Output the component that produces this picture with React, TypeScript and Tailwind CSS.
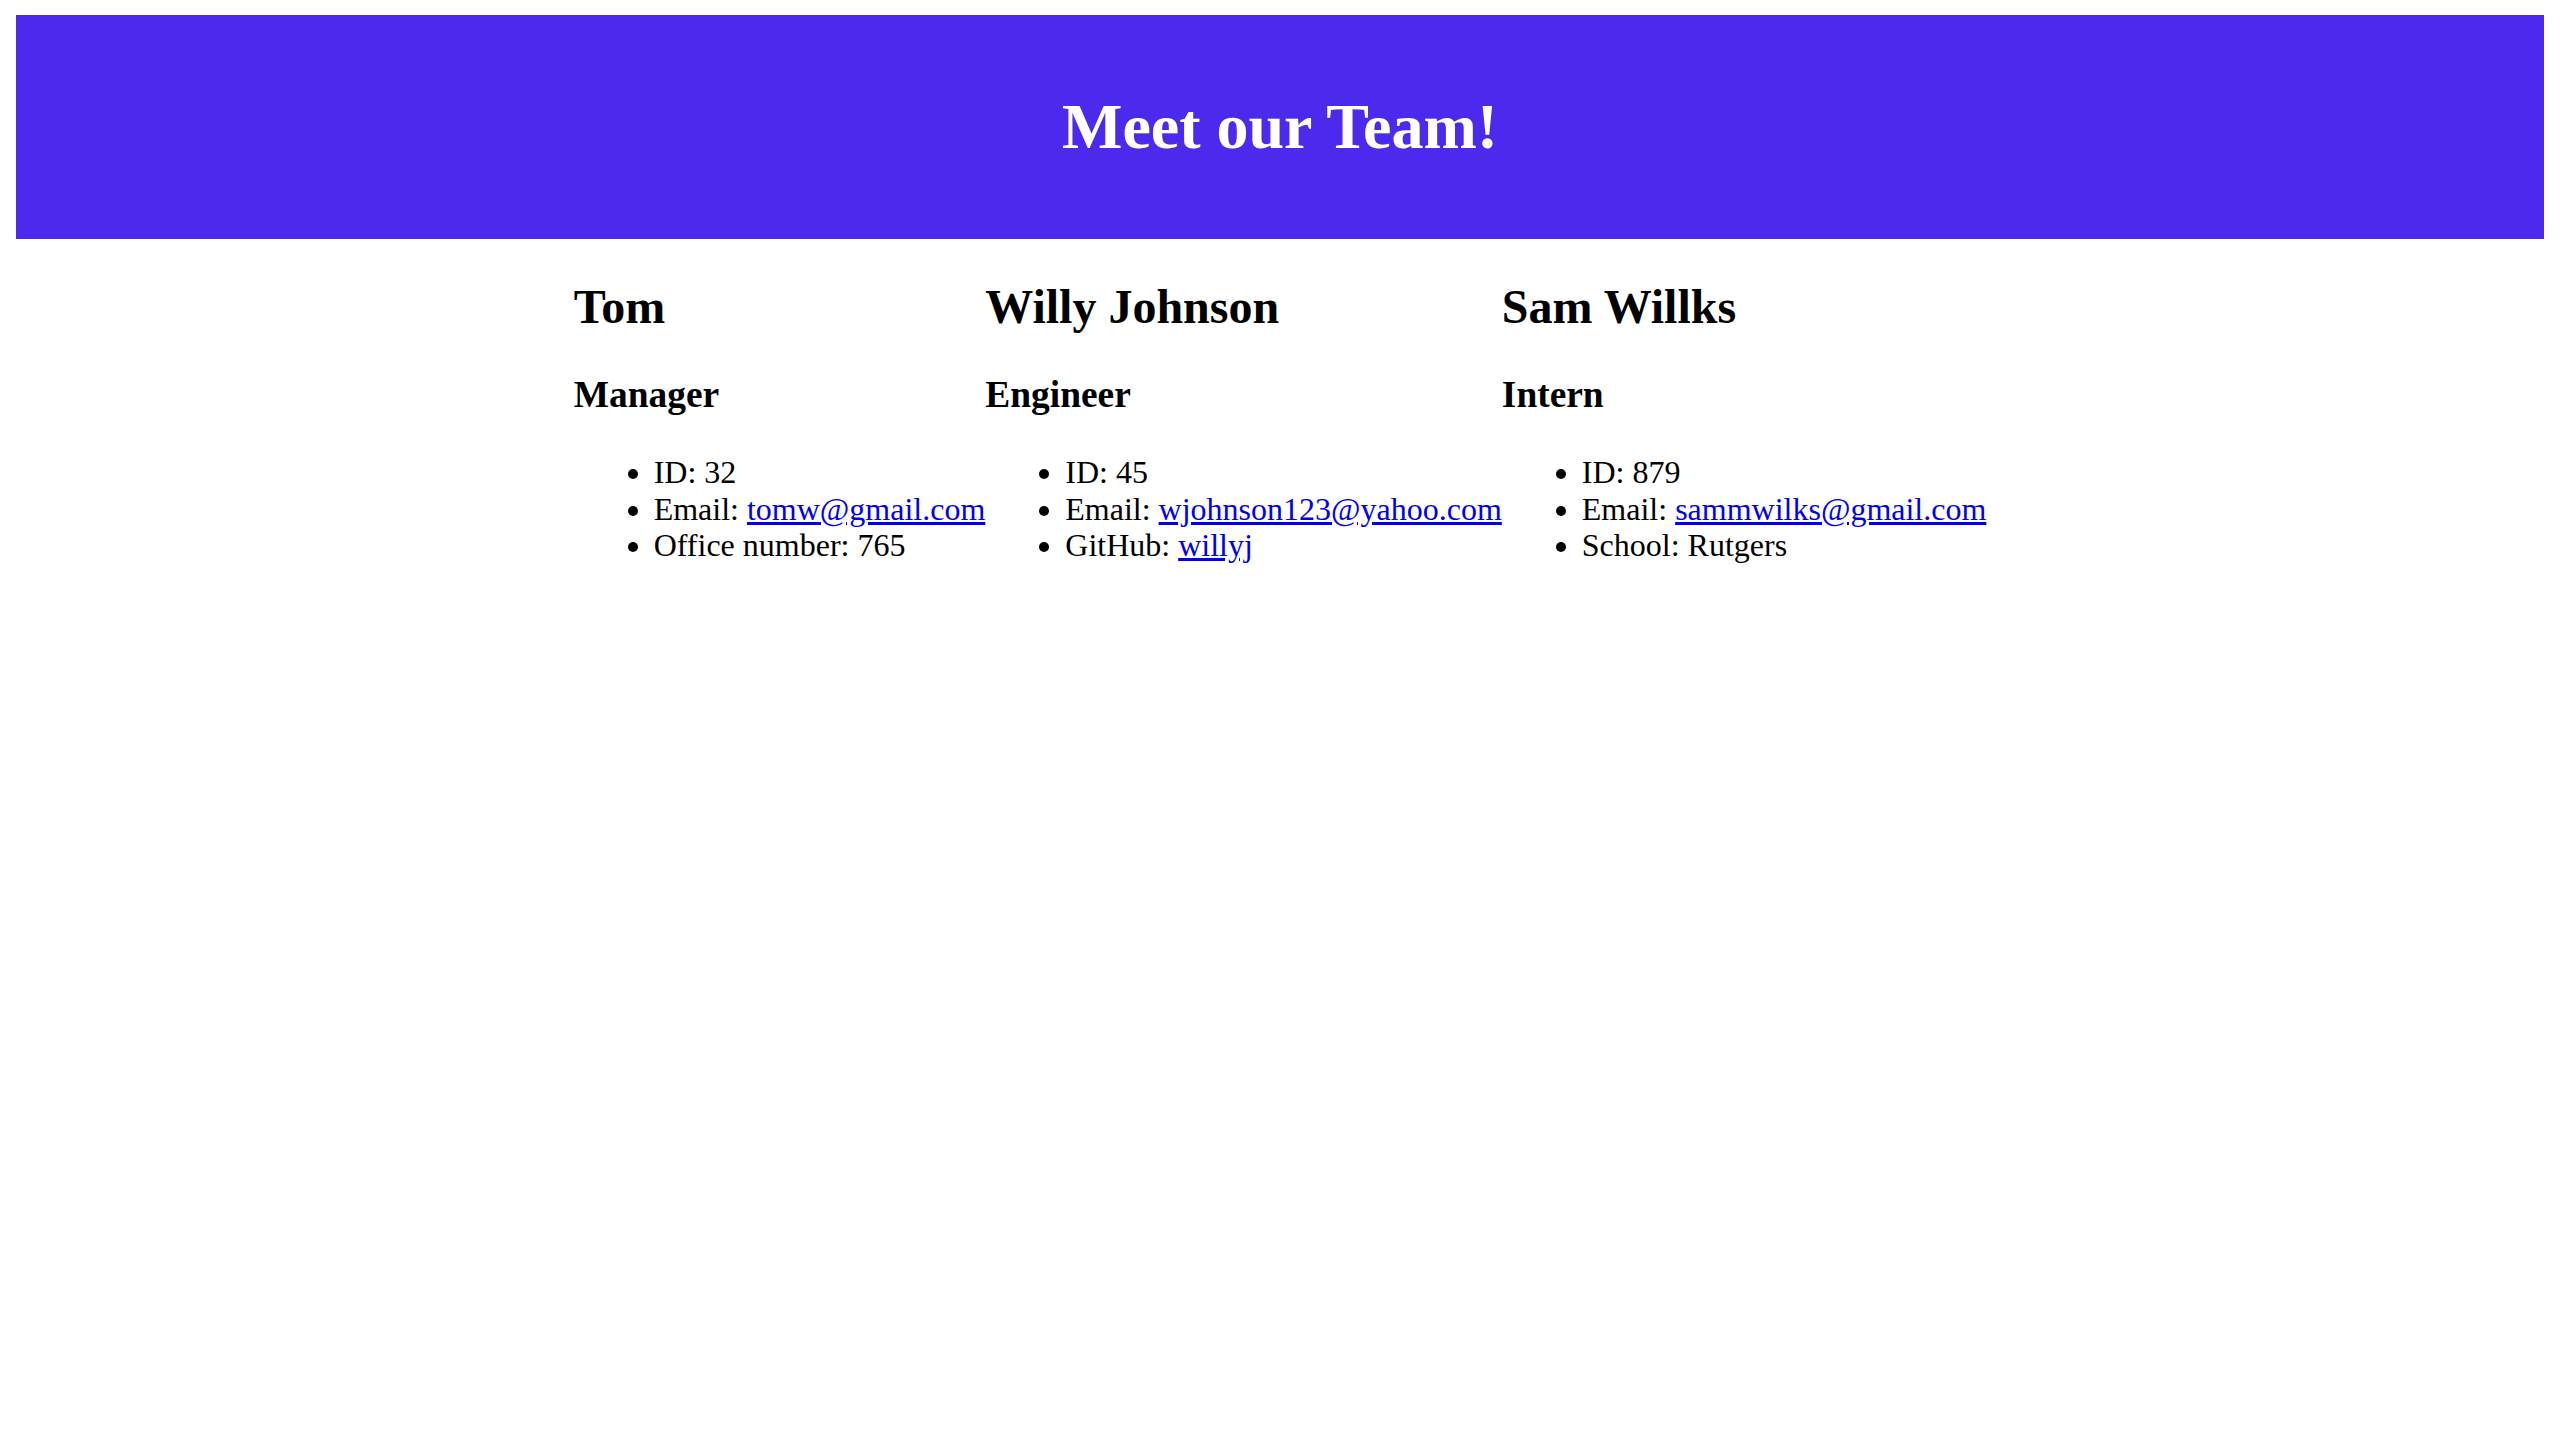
const team = [
  {
    name: "Tom",
    role: "Manager",
    id: "32",
    email: "tomw@gmail.com",
    extra: { label: "Office number", value: "765" },
  },
  {
    name: "Willy Johnson",
    role: "Engineer",
    id: "45",
    email: "wjohnson123@yahoo.com",
    extra: { label: "GitHub", value: "willyj", link: true },
  },
  {
    name: "Sam Willks",
    role: "Intern",
    id: "879",
    email: "sammwilks@gmail.com",
    extra: { label: "School", value: "Rutgers" },
  },
];

export default function App() {
  return (
    <div className="min-h-screen bg-white px-4 pt-[15px] font-['Liberation_Serif','Times_New_Roman',serif] text-black">
      {/* Banner */}
      <header className="flex h-[224px] items-center justify-center bg-[#4b2aee]">
        <h1 className="text-[64px] font-bold leading-[73.6px] text-white">Meet our Team!</h1>
      </header>

      {/* Team columns */}
      <section className="flex justify-center">
        {team.map((m) => (
          <div key={m.name}>
            <h2 className="mt-[40px] text-[48px] font-bold leading-[55.2px]">{m.name}</h2>
            <h3 className="mt-[39px] text-[37.44px] font-bold leading-[43px]">{m.role}</h3>
            <ul className="mt-[37.5px] list-disc pl-[80px] text-[32px] leading-[36.8px]">
              <li>ID: {m.id}</li>
              <li>
                Email:{" "}
                <a href={`mailto:${m.email}`} className="text-[#0000ee] underline">
                  {m.email}
                </a>
              </li>
              <li>
                {m.extra.label}:{" "}
                {m.extra.link ? (
                  <a href={`https://github.com/${m.extra.value}`} className="text-[#0000ee] underline">
                    {m.extra.value}
                  </a>
                ) : (
                  m.extra.value
                )}
              </li>
            </ul>
          </div>
        ))}
      </section>
    </div>
  );
}
